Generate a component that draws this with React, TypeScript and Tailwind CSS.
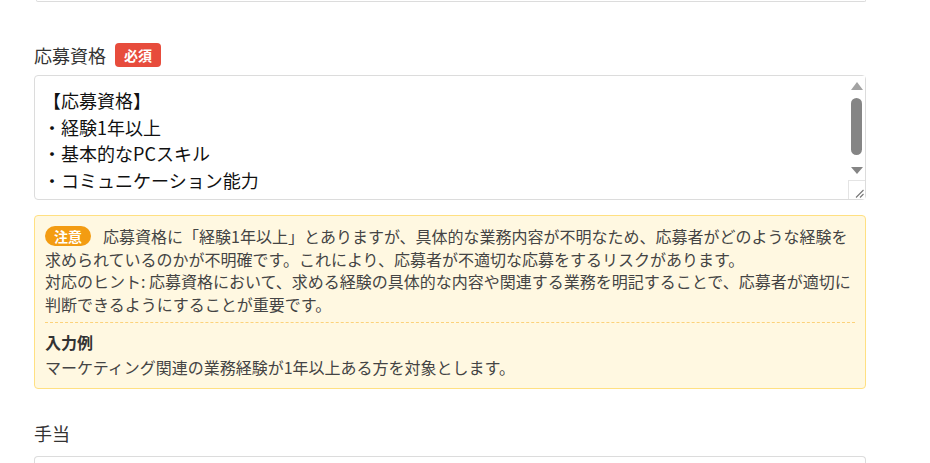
import React from "react";

const qualification = [
  "【応募資格】",
  "・経験1年以上",
  "・基本的なPCスキル",
  "・コミュニケーション能力",
].join("\n");

const font = { fontFamily: '"Noto Sans CJK JP", "Noto Sans", sans-serif' };

function RequiredBadge() {
  return (
    <span className="inline-flex h-[24px] items-center rounded-[4px] bg-[#e74c3c] px-[9px] text-[14px] font-bold leading-none text-white">
      必須
    </span>
  );
}

// classic-looking scrollbar drawn over the textarea's right edge
function FakeScrollbar() {
  return (
    <div className="pointer-events-none absolute bottom-[1px] right-[1px] top-[1px] flex w-[17px] flex-col bg-white">
      <div className="flex flex-1 flex-col items-center pt-[6px]">
        <svg width="12" height="8" viewBox="0 0 12 8">
          <path d="M6 0 L12 8 L0 8 Z" fill="#a3a3a3" />
        </svg>
        <div className="mt-[8px] h-[57px] w-[11px] rounded-full bg-[#858585]" />
        <div className="flex-1" />
        <svg width="12" height="7" viewBox="0 0 12 7" className="mb-[6px]">
          <path d="M0 0 L12 0 L6 7 Z" fill="#858585" />
        </svg>
      </div>
      <div className="flex h-[19px] items-end justify-end border-l border-t border-[#e4e4e4] pb-[1px] pr-[1px]">
        <svg width="9" height="9" viewBox="0 0 9 9">
          <path d="M8.5 1 L1 8.5 M8.5 5 L5 8.5" stroke="#777" strokeWidth="1.1" />
        </svg>
      </div>
    </div>
  );
}

export default function App() {
  return (
    <div className="min-h-[463px] w-[930px] bg-white pl-[34px] text-[#333]" style={font}>
      <div className="w-[832px]">
        {/* bottom edge of the previous field */}
        <div className="ml-[2px] h-[2px] rounded-b-[4px] border-x border-b border-[#dcdcdc]" />

        {/* 応募資格 */}
        <div className="mt-[41px] flex h-[24px] items-center gap-[9px]">
          <span className="text-[18px] leading-none text-[#333]">応募資格</span>
          <RequiredBadge />
        </div>

        <div className="relative mt-[8px]">
          <textarea
            readOnly
            defaultValue={qualification}
            className="block h-[125px] w-full resize-none overflow-hidden rounded-[4px] border border-[#dcdcdc] px-[8px] pt-[11px] text-[18px] leading-[26.5px] text-[#111] outline-none"
            style={font}
          />
          <FakeScrollbar />
        </div>

        {/* 注意 box */}
        <div className="mt-[15px] rounded-[4px] border border-[#ffe082] bg-[#fff8e1] px-[10px] pb-[10px] pt-[9px] text-[16px] leading-[22.5px] text-[#444]">
          <p>
            <span className="mr-[12px] inline-flex h-[20px] items-center rounded-full bg-[#f39c12] px-[9px] align-[1px] text-[14px] font-bold leading-none text-white">
              注意
            </span>
            応募資格に「経験1年以上」とありますが、具体的な業務内容が不明なため、応募者がどのような経験を求められているのかが不明確です。これにより、応募者が不適切な応募をするリスクがあります。
          </p>
          <p>
            対応のヒント:
            応募資格において、求める経験の具体的な内容や関連する業務を明記することで、応募者が適切に判断できるようにすることが重要です。
          </p>
          <div className="mt-[7px] border-t border-dashed border-[#fcd27a] pt-[8px]">
            <p className="font-bold text-[#333]">入力例</p>
            <p className="mt-[2px]">
              マーケティング関連の業務経験が1年以上ある方を対象とします。
            </p>
          </div>
        </div>

        {/* 手当 */}
        <div className="mt-[32px] flex h-[24px] items-center">
          <span className="text-[18px] leading-none text-[#333]">手当</span>
        </div>
        <div className="mt-[11px] h-[20px] rounded-t-[4px] border-x border-t border-[#dcdcdc]" />
      </div>
    </div>
  );
}
